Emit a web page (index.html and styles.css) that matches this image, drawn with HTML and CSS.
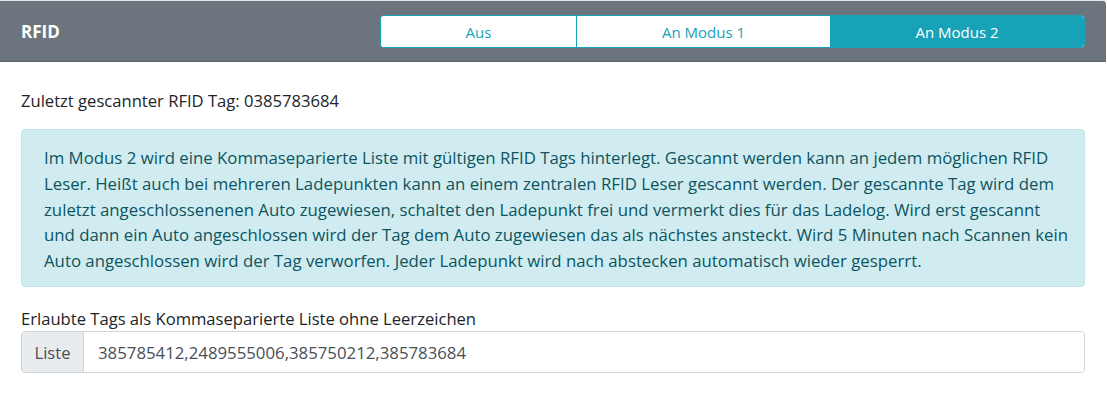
FILE: index.html
```html
<!DOCTYPE html>
<html lang="de">
<head>
<meta charset="utf-8">
<title>RFID</title>
<link rel="stylesheet" href="styles.css">
</head>
<body>
<div class="card">
  <div class="card-header">
    <div class="title">RFID</div>
    <div class="btn-group">
      <button class="btn">Aus</button>
      <button class="btn btn-mid">An Modus 1</button>
      <button class="btn active">An Modus 2</button>
    </div>
  </div>
  <div class="card-body">
    <p class="last-tag">Zuletzt gescannter RFID Tag: 0385783684</p>
    <div class="alert">Im Modus 2 wird eine Kommaseparierte Liste mit gültigen RFID Tags hinterlegt. Gescannt werden kann an jedem möglichen RFID<br>Leser. Heißt auch bei mehreren Ladepunkten kann an einem zentralen RFID Leser gescannt werden. Der gescannte Tag wird dem<br>zuletzt angeschlossenenen Auto zugewiesen, schaltet den Ladepunkt frei und vermerkt dies für das Ladelog. Wird erst gescannt<br>und dann ein Auto angeschlossen wird der Tag dem Auto zugewiesen das als nächstes ansteckt. Wird 5 Minuten nach Scannen kein<br>Auto angeschlossen wird der Tag verworfen. Jeder Ladepunkt wird nach abstecken automatisch wieder gesperrt.</div>
    <label class="label" for="tags">Erlaubte Tags als Kommaseparierte Liste ohne Leerzeichen</label>
    <div class="input-group">
      <span class="prepend">Liste</span>
      <input id="tags" class="input" type="text" value="385785412,2489555006,385750212,385783684">
    </div>
  </div>
</div>
</body>
</html>
```

FILE: styles.css
```css
* { box-sizing: border-box; }
html, body { margin: 0; padding: 0; background: #fff; }
body {
  font-family: "Open Sans", "Noto Sans", sans-serif;
  font-size: 16.6px;
  color: #212529;
}
.card {
  width: 1107px;
  border-top: 1px solid #e6e7e9;
}
.card-header {
  width: 1106px;
  background: #6c757d;
  border-bottom: 1px solid #5d646b;
  border-top-right-radius: 3px;
  height: 61px;
  padding: 14px 21px 0 21px;
  display: flex;
  justify-content: space-between;
  align-items: flex-start;
}
.title {
  color: #fff;
  font-weight: 700;
  font-size: 17px;
  line-height: 33px;
}
.btn-group {
  display: flex;
  width: 705px;
  height: 33px;
  border-radius: 4px;
  overflow: hidden;
  border: 1px solid #17a2b8;
  background: #fff;
}
.btn {
  font-family: inherit;
  font-size: 15px;
  color: #17a2b8;
  background: #fff;
  border: none;
  margin: 0;
  padding: 0;
  height: 31px;
}
.btn:first-child { width: 195px; }
.btn-mid { width: 254px; border-left: 1px solid #17a2b8; }
.btn.active { flex: 1; background: #17a2b8; color: #fff; }
.card-body {
  padding: 26px 22px 20px 21px;
}
.last-tag {
  margin: 0 0 16px;
  line-height: 25px;
}
.alert {
  background: #d1ecf1;
  border: 1px solid #bee5eb;
  color: #0c5460;
  border-radius: 4px;
  padding: 15px 22px;
  font-size: 16.8px;
  line-height: 25.75px;
  height: 158px;
  white-space: nowrap;
}
.label {
  display: block;
  margin-top: 19px;
  line-height: 25px;
}
.input-group {
  display: flex;
  height: 42px;
  border: 1px solid #ced4da;
  border-radius: 4px;
  overflow: hidden;
}
.prepend {
  width: 62px;
  background: #e9ecef;
  border-right: 1px solid #ced4da;
  display: flex;
  align-items: center;
  justify-content: center;
  color: #495057;
}
.input {
  flex: 1;
  border: none;
  padding: 0 14px;
  font-family: inherit;
  font-size: 16.8px;
  color: #495057;
  outline: none;
}
```
